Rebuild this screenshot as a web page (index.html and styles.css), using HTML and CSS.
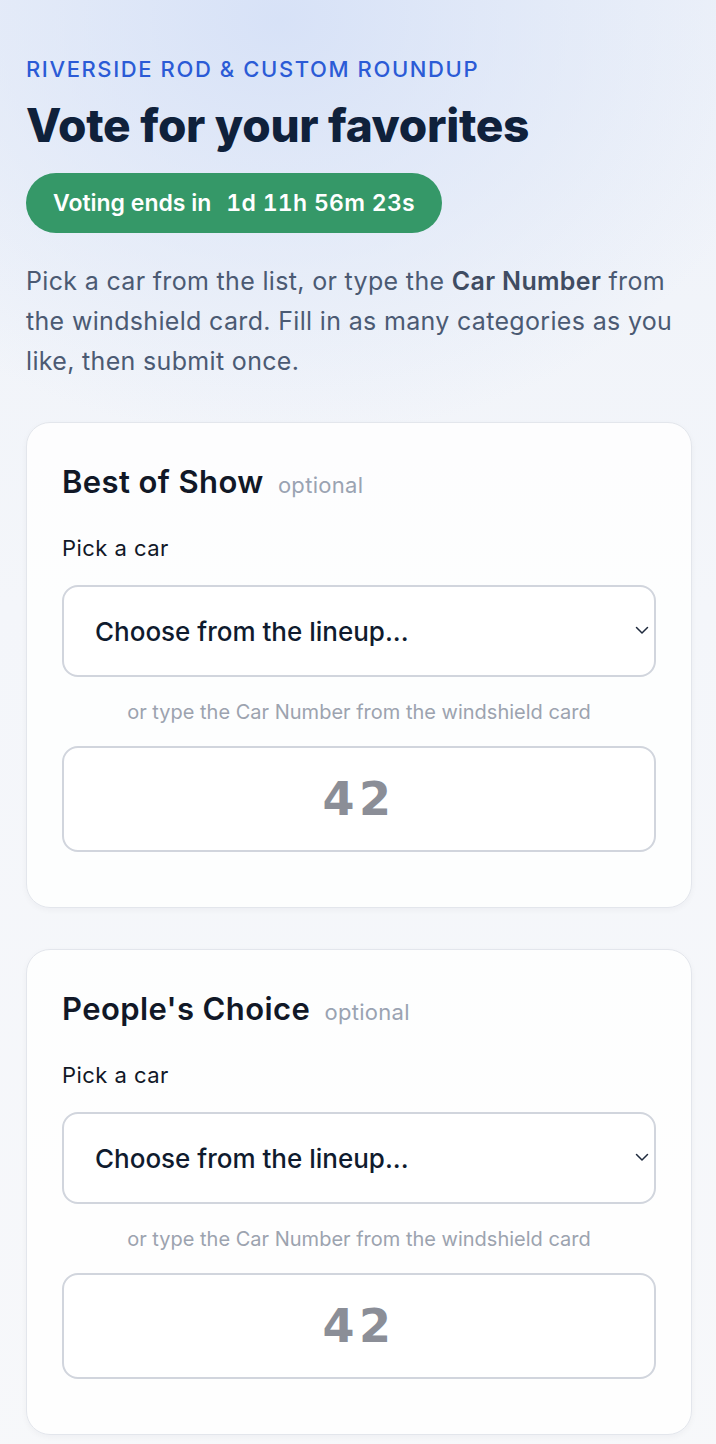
FILE: index.html
```html
<!DOCTYPE html>
<html lang="en">

<head>
    <meta charset="UTF-8">
    <meta name="viewport" content="width=device-width, initial-scale=1.0">
    <title>Vote for your favorites</title>
    <link rel="stylesheet" href="styles.css">
</head>

<body>
    <main class="page">
        <header class="intro">
            <p class="eyebrow">Riverside Rod &amp; Custom Roundup</p>
            <h1>Vote for your favorites</h1>
            <div class="countdown">
                <span>Voting ends in</span>
                <span class="countdown-time">1d 11h 56m 23s</span>
            </div>
            <p class="lead">Pick a car from the list, or type the <strong>Car Number</strong> from the windshield card. Fill in as many categories as you like, then submit once.</p>
        </header>

        <section class="vote-card">
            <h2>Best of Show <span class="optional">optional</span></h2>
            <label class="field-label" for="best-select">Pick a car</label>
            <div class="select-wrap">
                <select id="best-select" class="car-select">
                    <option>Choose from the lineup...</option>
                </select>
                <svg class="chevron" width="14" height="9" viewBox="0 0 14 9"><path d="M1.5 1.5 L7 7 L12.5 1.5" fill="none" stroke="#1f2a3d" stroke-width="1.5" stroke-linecap="round" stroke-linejoin="round"/></svg>
            </div>
            <p class="hint">or type the Car Number from the windshield card</p>
            <input class="car-number" type="text" inputmode="numeric" placeholder="42">
        </section>

        <section class="vote-card">
            <h2>People's Choice <span class="optional">optional</span></h2>
            <label class="field-label" for="people-select">Pick a car</label>
            <div class="select-wrap">
                <select id="people-select" class="car-select">
                    <option>Choose from the lineup...</option>
                </select>
                <svg class="chevron" width="14" height="9" viewBox="0 0 14 9"><path d="M1.5 1.5 L7 7 L12.5 1.5" fill="none" stroke="#1f2a3d" stroke-width="1.5" stroke-linecap="round" stroke-linejoin="round"/></svg>
            </div>
            <p class="hint">or type the Car Number from the windshield card</p>
            <input class="car-number" type="text" inputmode="numeric" placeholder="42">
        </section>
    </main>
</body>

</html>
```

FILE: styles.css
```css
body {
    margin: 0;
    font-family: Inter, 'Noto Sans', 'Liberation Sans', sans-serif;
    color: #111827;
    background:
        radial-gradient(ellipse 520px 420px at 280px 20px, rgba(214, 225, 247, 0.95) 0%, rgba(214, 225, 247, 0) 100%),
        linear-gradient(180deg, #eef2f9 0%, #f4f6fa 40%, #f7f8fa 100%);
    min-height: 100vh;
}

.page {
    padding: 56px 24px 40px 26px;
}

.eyebrow {
    margin: 0;
    font-size: 22px;
    line-height: 26px;
    font-weight: 500;
    letter-spacing: 1.6px;
    text-transform: uppercase;
    color: #2b5bd6;
}

h1 {
    margin: 17px 0 0;
    font-size: 46px;
    line-height: 52px;
    font-weight: 800;
    letter-spacing: -0.3px;
    color: #0f213b;
}

.countdown {
    display: inline-flex;
    align-items: center;
    gap: 15px;
    margin-top: 22px;
    height: 60px;
    padding: 0 27px;
    border-radius: 30px;
    background-color: #359868;
    color: #fff;
    font-size: 23px;
    font-weight: 600;
}

.countdown-time {
    font-variant-numeric: tabular-nums;
    letter-spacing: 0.3px;
}

.lead {
    margin: 28px 0 41px;
    font-size: 25px;
    line-height: 40px;
    letter-spacing: 0.33px;
    color: #4b5a73;
}

.lead strong {
    font-weight: 600;
    color: #3f4c62;
}

.vote-card {
    display: flex;
    flex-direction: column;
    padding: 41px 35px 55px;
    margin-bottom: 41px;
    border: 1px solid #e3e6ec;
    border-radius: 24px;
    background-color: rgba(255, 255, 255, 0.82);
    box-shadow: 0 2px 6px rgba(15, 23, 42, 0.04);
}

.vote-card h2 {
    margin: 0;
    font-size: 31px;
    line-height: 36px;
    font-weight: 600;
    letter-spacing: 0.4px;
    color: #111827;
}

.optional {
    margin-left: 6px;
    font-size: 22px;
    line-height: 1;
    font-weight: 400;
    letter-spacing: 0.3px;
    color: #9aa3b2;
}

.field-label {
    margin-top: 34px;
    font-size: 22px;
    line-height: 28px;
    letter-spacing: 0.45px;
    color: #111827;
}

.select-wrap {
    position: relative;
    margin-top: 23px;
}

.car-select {
    width: 100%;
    height: 92px;
    padding: 0 50px 0 31px;
    border: 2px solid #d1d5dd;
    border-radius: 16px;
    background-color: #fff;
    font-family: inherit;
    font-size: 26px;
    font-weight: 500;
    color: #0f1b2e;
    -webkit-appearance: none;
    appearance: none;
}

.chevron {
    position: absolute;
    right: 7px;
    top: 41px;
    pointer-events: none;
}

.hint {
    margin: 23px 0 22px;
    text-align: center;
    font-size: 20px;
    line-height: 24px;
    color: #9ca3af;
}

.car-number {
    box-sizing: border-box;
    width: 100%;
    height: 106px;
    border: 2px solid #d1d5dd;
    border-radius: 16px;
    background-color: #fff;
    text-align: center;
    font-family: 'DejaVu Sans', 'Liberation Sans', sans-serif;
    font-size: 46px;
    font-weight: 700;
    letter-spacing: 0.1em;
    color: #111827;
}

.car-number::placeholder {
    color: #8b8e97;
}
```
